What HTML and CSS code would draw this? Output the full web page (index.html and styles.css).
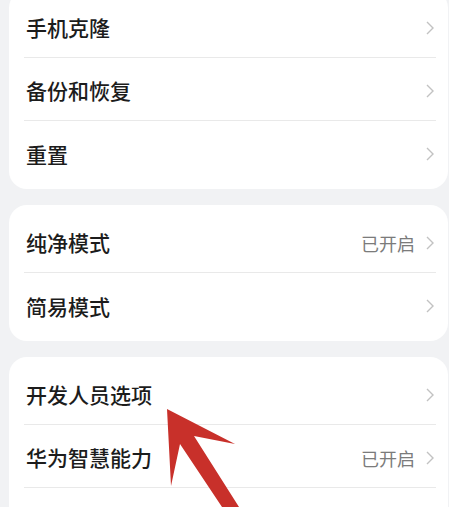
FILE: index.html
```html
<!DOCTYPE html>
<html lang="zh-CN">
<head>
<meta charset="utf-8">
<link rel="stylesheet" href="styles.css">
</head>
<body>
<div class="page">
  <div class="card">
    <div class="row"><span class="label">手机克隆</span><span class="right"><svg class="chev" viewBox="0 0 8 14"><polyline points="1,1 7,7 1,13"/></svg></span></div>
    <div class="row"><span class="label">备份和恢复</span><span class="right"><svg class="chev" viewBox="0 0 8 14"><polyline points="1,1 7,7 1,13"/></svg></span></div>
    <div class="row"><span class="label">重置</span><span class="right"><svg class="chev" viewBox="0 0 8 14"><polyline points="1,1 7,7 1,13"/></svg></span></div>
  </div>
  <div class="card">
    <div class="row"><span class="label">纯净模式</span><span class="right"><span class="status">已开启</span><svg class="chev" viewBox="0 0 8 14"><polyline points="1,1 7,7 1,13"/></svg></span></div>
    <div class="row"><span class="label">简易模式</span><span class="right"><svg class="chev" viewBox="0 0 8 14"><polyline points="1,1 7,7 1,13"/></svg></span></div>
  </div>
  <div class="card">
    <div class="row"><span class="label">开发人员选项</span><span class="right"><svg class="chev" viewBox="0 0 8 14"><polyline points="1,1 7,7 1,13"/></svg></span></div>
    <div class="row"><span class="label">华为智慧能力</span><span class="right"><span class="status">已开启</span><svg class="chev" viewBox="0 0 8 14"><polyline points="1,1 7,7 1,13"/></svg></span></div>
    <div class="row"><span class="label">&nbsp;</span><span class="right"></span></div>
  </div>
</div>
<svg class="arrow" viewBox="0 0 449 507" width="449" height="507">
  <polygon points="167,409 235,444 194,436 239,507 222,507 180,444 171,486"/>
</svg>
</body>
</html>
```
FILE: styles.css
```css
html, body {
  margin: 0;
  padding: 0;
  background: #f1f2f4;
  height: 507px;
  overflow: hidden;
}
body {
  position: relative;
  font-family: "Noto Sans CJK SC", "Noto Sans", sans-serif;
}
.page {
  display: flex;
  flex-direction: column;
  gap: 16px;
  margin-top: -10px;
  padding: 0 1px 0 9px;
}
.card {
  background: #ffffff;
  border-radius: 18px;
  padding: 5px 0;
}
.row {
  height: 63px;
  display: flex;
  align-items: center;
  justify-content: space-between;
  margin: 0 12px 0 15px;
  padding: 3px 2px 0 2px;
  box-sizing: border-box;
  border-bottom: 1px solid #e9e9e9;
}
.row:last-child {
  border-bottom: none;
}
.label {
  font-size: 21px;
  font-weight: 500;
  color: #1c1c1c;
  line-height: 1;
}
.right {
  display: flex;
  align-items: center;
  gap: 11px;
}
.status {
  font-size: 18px;
  color: #7b7b7b;
  line-height: 1;
}
.chev {
  width: 8px;
  height: 14px;
  fill: none;
  stroke: #c2c2c2;
  stroke-width: 1.4;
}
.arrow {
  position: absolute;
  left: 0;
  top: 0;
}
.arrow polygon {
  fill: #c8302a;
}
```
